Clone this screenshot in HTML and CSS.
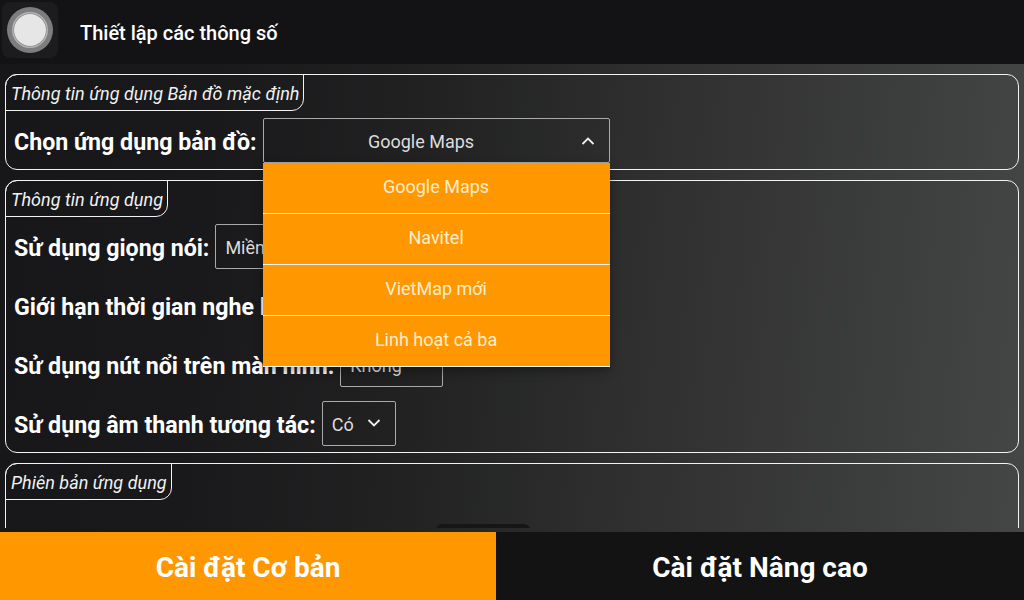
FILE: index.html
```html
<!DOCTYPE html>
<html lang="vi">
<head>
<meta charset="utf-8">
<title>Thiết lập các thông số</title>
<link rel="stylesheet" href="styles.css">
</head>
<body>
<div class="app">
  <header class="top">
    <div class="logo">
      <svg width="56" height="56" viewBox="0 0 56 56"><circle cx="28" cy="28" r="23" fill="#7d7d7d"/><circle cx="28" cy="28" r="18" fill="#b4b4b4"/><circle cx="28" cy="28" r="16.5" fill="#777"/><circle cx="28" cy="28" r="16" fill="#e6e6e6"/></svg>
    </div>
    <h1 class="title">Thiết lập các thông số</h1>
  </header>
  <main class="content">
    <section class="group">
      <div class="legend">Thông tin ứng dụng Bản đồ mặc định</div>
      <div class="row">
        <span class="label">Chọn ứng dụng bản đồ:</span>
        <div class="select select-map">
          <span class="value">Google Maps</span>
          <svg class="chev" width="14" height="8" viewBox="0 0 14 8"><path d="M1.5 7 7 1.500 12.500 7" fill="none" stroke="#eee" stroke-width="1.800"/></svg>
          <ul class="menu">
            <li>Google Maps</li>
            <li>Navitel</li>
            <li>VietMap mới</li>
            <li>Linh hoạt cả ba</li>
          </ul>
        </div>
      </div>
    </section>
    <section class="group">
      <div class="legend">Thông tin ứng dụng</div>
      <div class="row">
        <span class="label">Sử dụng giọng nói:</span>
        <div class="select select-voice"><span class="value">Miền Bắc</span></div>
      </div>
      <div class="row">
        <span class="label">Giới hạn thời gian nghe lại:</span>
        <div class="select select-time"><span class="value">Không</span></div>
      </div>
      <div class="row">
        <span class="label">Sử dụng nút nổi trên màn hình:</span>
        <div class="select select-float"><span class="value">Không</span></div>
      </div>
      <div class="row">
        <span class="label">Sử dụng âm thanh tương tác:</span>
        <div class="select select-sound">
          <span class="value">Có</span>
          <svg class="chev" width="14" height="8" viewBox="0 0 14 8"><path d="M1.500 1 7 6.500 12.500 1" fill="none" stroke="#eee" stroke-width="1.800"/></svg>
        </div>
      </div>
    </section>
    <section class="group group-last">
      <div class="legend">Phiên bản ứng dụng</div>
      <div class="update"></div>
    </section>
  </main>
  <nav class="tabs">
    <div class="tab tab-on">Cài đặt Cơ bản</div>
    <div class="tab tab-off">Cài đặt Nâng cao</div>
  </nav>
</div>
</body>
</html>
```
FILE: styles.css
```css
* { box-sizing: border-box; }
html, body { margin: 0; height: 100%; }
body {
  font-family: Roboto, "Noto Sans", sans-serif;
  color: #fff;
  background: #18181a;
  overflow: hidden;
}
.app {
  width: 1024px;
  height: 600px;
  display: flex;
  flex-direction: column;
  background: linear-gradient(95deg, #17171a 0%, #19191b 20%, #212122 40%, #2d2e2d 60%, #454746 100%);
}
.top {
  height: 64px;
  flex: none;
  display: flex;
  align-items: flex-start;
  background: #131315;
  padding: 2px 0 0 2px;
}
.logo {
  width: 56px;
  height: 56px;
  border-radius: 8px;
  background: #1c1c1e;
}
.logo svg { display: block; }
.title {
  margin: 19px 0 0 22px;
  font-size: 20px;
  font-weight: 500;
  line-height: 24px;
}
.content {
  flex: none;
  height: 464px;
  margin-bottom: 4px;
  padding: 10px 5px 0;
  overflow: hidden;
  display: flex;
  flex-direction: column;
  gap: 10px;
}
.group {
  flex: none;
  border: 1px solid #f2f2f2;
  border-radius: 12px;
  padding-bottom: 6px;
}
.group-last { height: 120px; }
.legend {
  width: max-content;
  height: 37px;
  margin: -1px 0 0 -1px;
  padding: 1px 4px 0 5px;
  border: 1px solid #f2f2f2;
  border-radius: 12px 0 12px 0;
  font-size: 18px;
  font-style: italic;
  letter-spacing: .03px;
  line-height: 35px;
  color: #f2f2f2;
}
.row {
  display: flex;
  align-items: center;
  gap: 6px;
  height: 45px;
  margin: 7px 0 0 8px;
}
.row + .row { margin-top: 14px; }
.label {
  padding-top: 2px;
  font-size: 23.2px;
  font-weight: 700;
  line-height: 28px;
  white-space: nowrap;
}
.select {
  position: relative;
  height: 45px;
  display: flex;
  align-items: center;
  padding-top: 2px;
  border: 1px solid #aaa;
  border-radius: 2px;
  font-size: 18px;
  color: #ddd;
}
.value { white-space: nowrap; }
.select-map { width: 347px; justify-content: center; padding-right: 30px; }
.select-voice { width: 300px; padding-left: 9px; }
.select-time { width: 180px; padding-left: 9px; }
.select-float { width: 103px; padding-left: 9px; }
.select-sound { width: 74px; padding-left: 9px; gap: 13px; }
.select-sound .chev { margin-top: -4px; }
.select-map .chev { position: absolute; right: 14px; top: 18px; }
.menu {
  position: absolute;
  z-index: 5;
  left: -1px;
  top: 44px;
  width: 347px;
  margin: 0;
  padding: 0;
  list-style: none;
  background: #ff9800;
  box-shadow: 0 4px 10px rgba(0, 0, 0, .35);
}
.menu li {
  height: 51px;
  display: flex;
  align-items: center;
  justify-content: center;
  padding-bottom: 4px;
  border-bottom: 1px solid #f4f4f4;
  color: #fdeccf;
  font-size: 18px;
}
.update {
  width: 94px;
  height: 30px;
  margin: 24px 0 0 430px;
  border-radius: 6px;
  background: #161616;
}
.tabs { flex: none; height: 68px; display: flex; }
.tab {
  display: flex;
  align-items: center;
  justify-content: center;
  padding-top: 2px;
  font-size: 28px;
  font-weight: 700;
}
.tab-on { width: 496px; background: #ff9800; color: #fff; }
.tab-off { flex: 1; background: #131313; color: #fff; }
```
